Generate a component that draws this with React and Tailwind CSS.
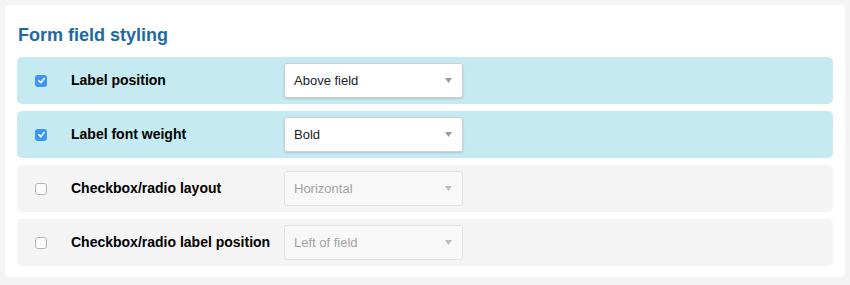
const rows = [
  { label: 'Label position', value: 'Above field', on: true },
  { label: 'Label font weight', value: 'Bold', on: true },
  { label: 'Checkbox/radio layout', value: 'Horizontal', on: false },
  { label: 'Checkbox/radio label position', value: 'Left of field', on: false },
]

function Check({ on }) {
  if (on) {
    return (
      <span className="flex h-[12px] w-[12px] items-center justify-center rounded-[3px] bg-[#3d95f5]">
        <svg width="9" height="9" viewBox="0 0 10 10">
          <path d="M2 5.2 L4.2 7.4 L8 2.8" fill="none" stroke="white" strokeWidth="1.7" strokeLinecap="round" strokeLinejoin="round" />
        </svg>
      </span>
    )
  }
  return <span className="block h-[12px] w-[12px] rounded-[3px] border border-[#b5b5b5] bg-white" />
}

function Select({ value, on }) {
  return (
    <div
      className={
        on
          ? 'flex h-[35px] w-[179px] items-center justify-between rounded-[3px] border border-[#cfcfcf] bg-white pl-[9px] pr-[10px] text-[13px] text-[#222] shadow-[0_1px_2px_rgba(0,0,0,0.15)]'
          : 'flex h-[35px] w-[179px] items-center justify-between rounded-[3px] border border-[#e2e2e2] bg-[#f8f8f8] pl-[9px] pr-[10px] text-[13px] text-[#a3a3a3]'
      }
    >
      <span>{value}</span>
      <svg width="7" height="5" viewBox="0 0 7 5">
        <path d="M0 0 L7 0 L3.5 5 Z" fill={on ? '#9a9a9a' : '#bdbdbd'} />
      </svg>
    </div>
  )
}

export default function App() {
  return (
    <div className="min-h-screen bg-[#f4f4f4] p-[5px] font-['Liberation_Sans',Arial,sans-serif]">
      <div className="rounded-[5px] bg-white px-[12px] pt-[19px] pb-[11px]">
        <h2 className="mb-[11px] pl-[1px] text-[18px] font-bold leading-[22px] text-[#1c6aa0]">Form field styling</h2>
        <div className="flex flex-col gap-[7px]">
          {rows.map((r) => (
            <div
              key={r.label}
              className={
                r.on
                  ? 'flex h-[47px] items-center rounded-[5px] bg-[#c5eaf2]'
                  : 'flex h-[47px] items-center rounded-[5px] bg-[#f4f4f4]'
              }
            >
              <div className="w-[54px] pl-[18px]">
                <Check on={r.on} />
              </div>
              <div className="w-[213px] text-[14px] font-bold text-black">{r.label}</div>
              <Select value={r.value} on={r.on} />
            </div>
          ))}
        </div>
      </div>
    </div>
  )
}
